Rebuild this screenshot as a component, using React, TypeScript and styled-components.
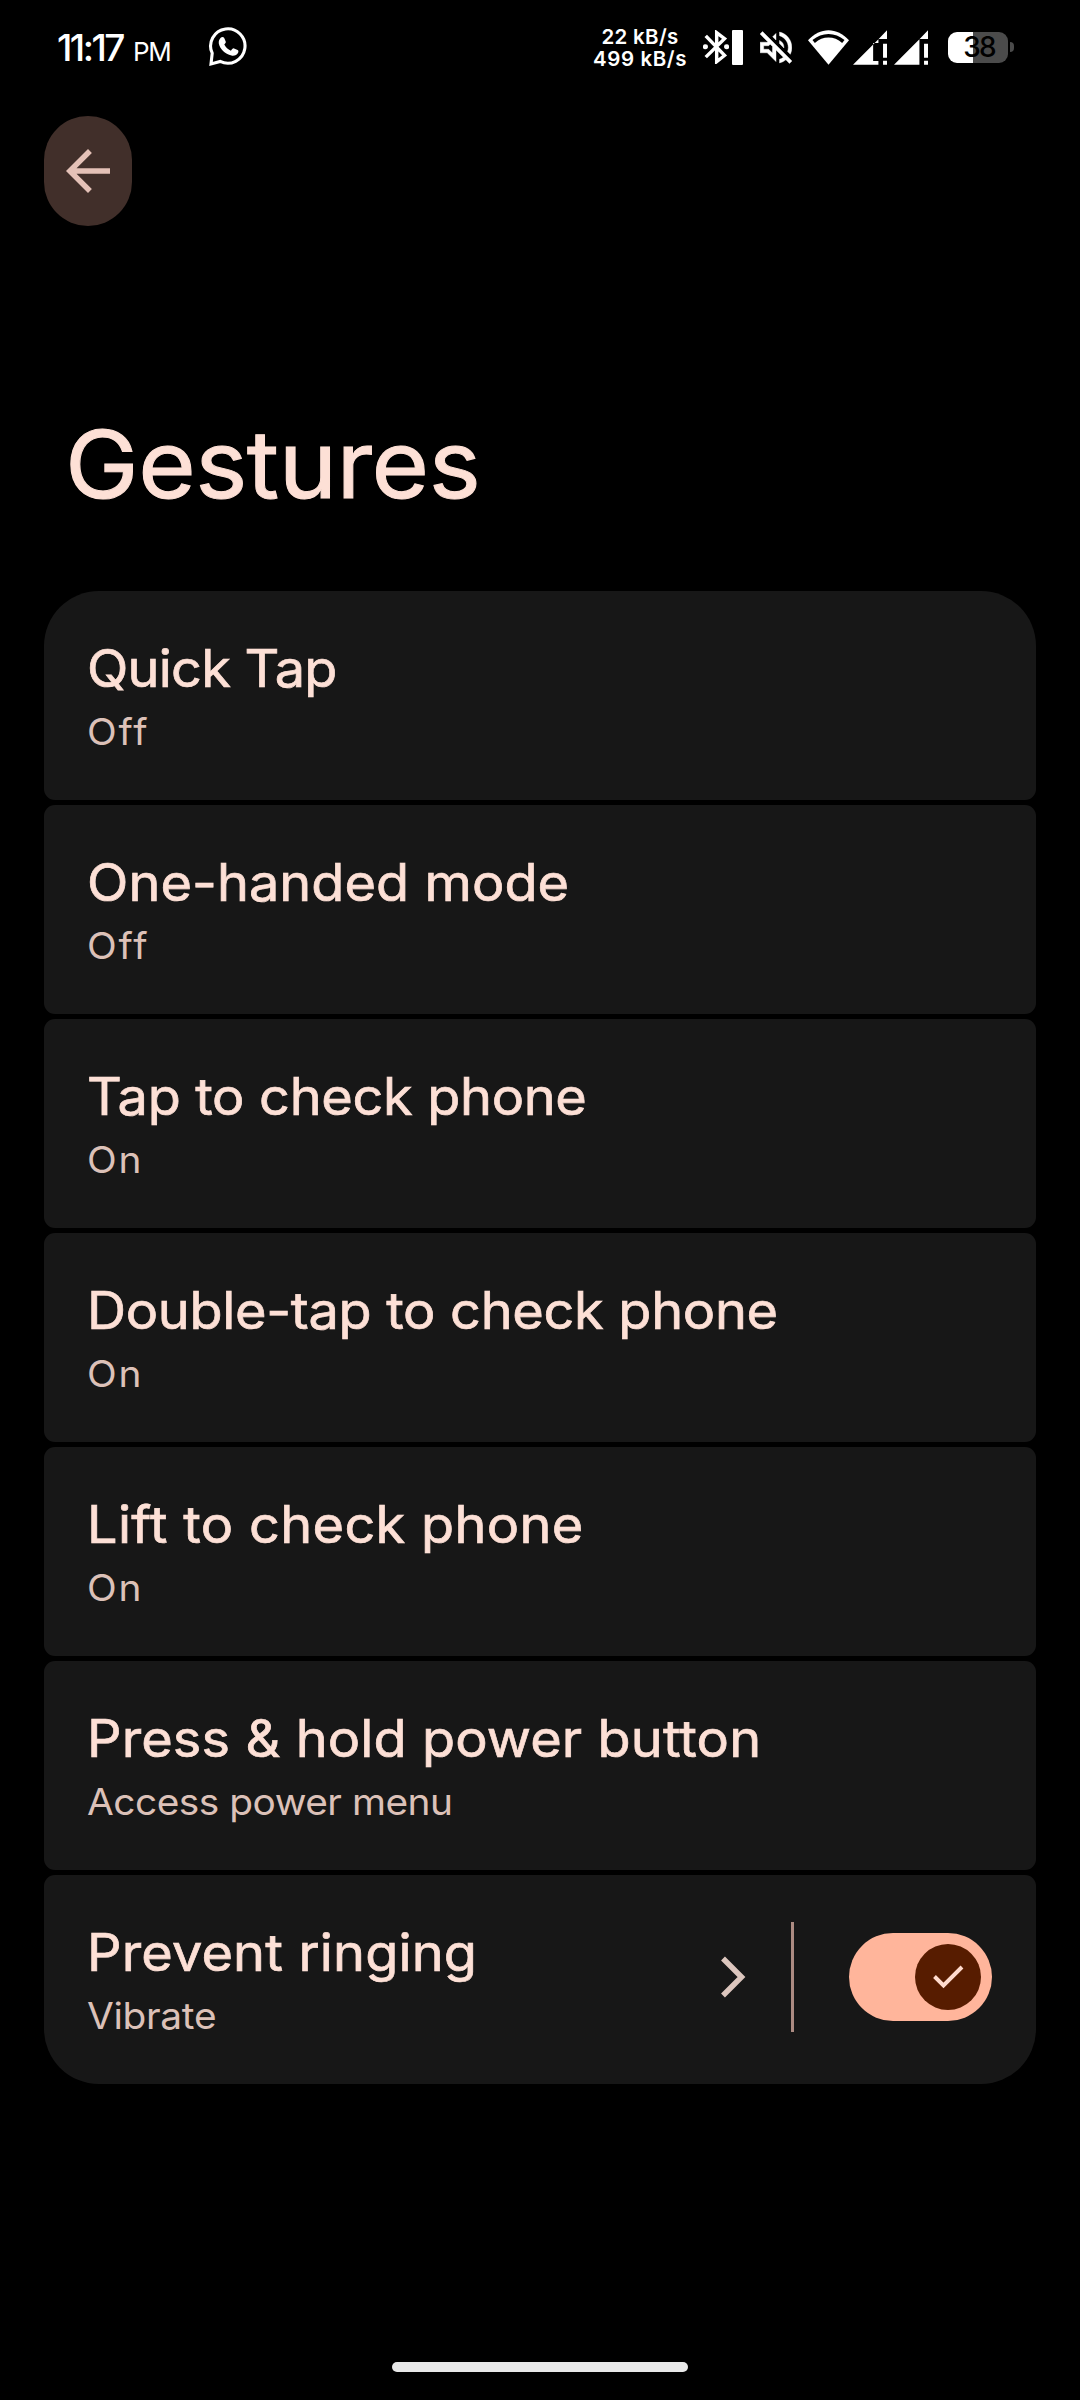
import React from 'react';
import styled, { createGlobalStyle } from 'styled-components';

const GlobalStyle = createGlobalStyle`
  * { box-sizing: border-box; }
  body {
    margin: 0;
    background: #000;
    font-family: Inter, "Noto Sans", sans-serif;
  }
`;

const Screen = styled.main`
  display: flex;
  flex-direction: column;
  width: 1080px;
  height: 2400px;
  background: #000;
  overflow: hidden;
`;

const StatusBar = styled.header`
  display: flex;
  align-items: center;
  height: 94px;
  padding: 0 66px 0 57px;
  color: #fff;
  flex: none;
`;

const Clock = styled.div`
  display: flex;
  align-items: baseline;
  width: 151px;
  font-size: 37px;
  letter-spacing: -2.5px;
  font-weight: 500;
  white-space: nowrap;
`;

const Meridiem = styled.span`
  margin-left: 10px;
  font-size: 26px;
  font-weight: 400;
  letter-spacing: -1.3px;
`;

const StatusIcons = styled.div`
  display: flex;
  align-items: center;
  margin-left: auto;
`;

const NetSpeed = styled.div`
  width: 96px;
  padding-top: 2px;
  margin-right: 15px;
  font-size: 20.5px;
  font-weight: 600;
  line-height: 21.7px;
  text-align: center;
  white-space: nowrap;
`;

const SpeedLine = styled.div<{ $tracking: number }>`
  letter-spacing: ${(p) => p.$tracking}px;
`;

const Glyph = styled.svg<{ $gap?: number }>`
  display: block;
  flex: none;
  margin-right: ${(p) => p.$gap ?? 0}px;
`;

const BluetoothLevel = styled.div`
  width: 11px;
  height: 35px;
  margin-right: 17px;
  background: #fff;
  border-radius: 1px;
`;

const Battery = styled.div`
  display: flex;
  align-items: center;
  justify-content: center;
  width: 60px;
  height: 31px;
  padding-left: 2px;
  border-radius: 9px;
  background: linear-gradient(to right, #fff 25px, #4b4b4b 25px);
  color: #000;
  font-size: 28px;
  font-weight: 500;
  line-height: 31px;
  letter-spacing: -1.9px;
`;

const BatteryTip = styled.div`
  width: 4px;
  height: 10px;
  margin-left: 2px;
  border-radius: 0 5px 5px 0;
  background: #4b4b4b;
`;

const BackButton = styled.button`
  display: flex;
  align-items: center;
  justify-content: center;
  flex: none;
  width: 88px;
  height: 110px;
  margin: 22px 0 0 44px;
  padding: 0;
  border: 0;
  border-radius: 44px;
  background: #412f2a;
`;

const PageTitle = styled.h1`
  margin: 181px 0 70px 65px;
  color: #fde0d6;
  font-size: 94px;
  font-weight: 400;
  line-height: 114px;
  letter-spacing: -0.45px;
  transform: scaleX(1.05);
  transform-origin: left;
  -webkit-text-stroke: 1px #fde0d6;
`;

const List = styled.section`
  display: flex;
  flex-direction: column;
  gap: 5px;
  margin: 0 44px;
  border-radius: 55px;
  overflow: hidden;
`;

const Row = styled.div`
  display: flex;
  align-items: center;
  justify-content: space-between;
  height: 209px;
  padding: 0 44px 0 43px;
  border-radius: 11px;
  background: #171717;
`;

const RowText = styled.div`
  display: flex;
  flex-direction: column;
  gap: 10px;
  padding-bottom: 1px;
  white-space: nowrap;
  transform: scaleX(1.05);
  transform-origin: left;
`;

const RowTitle = styled.div<{ $tracking: number }>`
  color: #fde0d6;
  font-size: 51.5px;
  line-height: 62px;
  letter-spacing: ${(p) => p.$tracking}px;
  -webkit-text-stroke: 0.7px #fde0d6;
`;

const RowSummary = styled.div<{ $tracking: number }>`
  color: #dcc1b8;
  font-size: 37px;
  line-height: 45px;
  letter-spacing: ${(p) => p.$tracking}px;
`;

const RowControls = styled.div`
  display: flex;
  align-items: center;
  padding-bottom: 5px;
`;

const Divider = styled.div`
  width: 3px;
  height: 110px;
  margin: 0 55px 0 45px;
  background: #ac8b82;
`;

const Switch = styled.div`
  display: flex;
  align-items: center;
  justify-content: flex-end;
  width: 143px;
  height: 88px;
  padding: 11px;
  border-radius: 44px;
  background: #ffb59b;
`;

const Thumb = styled.div`
  width: 66px;
  height: 66px;
  border-radius: 50%;
  background: #571c00;
`;

const HomeHandle = styled.div`
  width: 296px;
  height: 10px;
  margin: auto auto 28px;
  border-radius: 5px;
  background: #e9e9e9;
`;

interface Gesture {
  title: string;
  summary: string;
  titleTracking: number;
  summaryTracking: number;
  toggle?: boolean;
}

const gestures: Gesture[] = [
  { title: 'Quick Tap', summary: 'Off', titleTracking: -0.75, summaryTracking: 1.8 },
  { title: 'One-handed mode', summary: 'Off', titleTracking: 0.05, summaryTracking: 1.8 },
  { title: 'Tap to check phone', summary: 'On', titleTracking: -0.32, summaryTracking: 1.6 },
  { title: 'Double-tap to check phone', summary: 'On', titleTracking: -0.3, summaryTracking: 1.6 },
  { title: 'Lift to check phone', summary: 'On', titleTracking: 0.3, summaryTracking: 1.6 },
  { title: 'Press & hold power button', summary: 'Access power menu', titleTracking: 0.1, summaryTracking: -0.48 },
  { title: 'Prevent ringing', summary: 'Vibrate', titleTracking: 0.15, summaryTracking: -0.3, toggle: true },
];

const WhatsApp = () => (
  <Glyph width="40" height="40" viewBox="0 0 40 40" fill="none">
    <path
      d="M4.2 26.2A17.2 17.2 0 1 1 12.2 34.4L3 37Z"
      stroke="#fff"
      strokeWidth="3.1"
      strokeLinejoin="miter"
    />
    <path
      d="M12.7 10.8c1.2-1.2 2.9-1 3.5.3l1.5 3.4c.4.9-.1 1.6-1.4 3.1 1.5 2.9 3.6 4.8 6.6 6.1 1.7-2 2.2-2.7 3.2-2.3l3.5 1.7c1 .5 1 1.4.5 2.6-1 2.5-4.1 3.5-6.6 2.9-6.6-1.6-11.6-6.6-12.7-12.1-.3-2.2.5-4.3 1.9-5.7Z"
      fill="#fff"
    />
  </Glyph>
);

const Bluetooth = () => (
  <Glyph $gap={3} width="26" height="34" viewBox="0 0 76 103" preserveAspectRatio="none">
    <path d="M8 18 63 77 40 96V8L63 26 8 82" fill="none" stroke="#fff" strokeWidth="10" />
    <circle cx="7" cy="51" r="7.5" fill="#fff" />
    <circle cx="69" cy="51" r="7.5" fill="#fff" />
  </Glyph>
);

const Muted = () => (
  <Glyph $gap={16} width="32" height="33" viewBox="2.9 2.9 18.2 18.2">
    <path
      fill="#fff"
      stroke="#fff"
      strokeWidth="0.25"
      d="M4.34 2.93 2.93 4.34 7.29 8.7 7 9H3v6h4l5 5v-6.59l4.18 4.18c-.65.49-1.38.88-2.18 1.11v2.06a8.94 8.94 0 0 0 3.61-1.75l2.05 2.05 1.41-1.41L4.34 2.93zM10 15.17 7.83 13H5v-2h2.83l.88-.88L10 11.41v3.76zM19 12c0 .82-.15 1.61-.41 2.34l1.53 1.53c.56-1.17.88-2.48.88-3.87 0-4.28-2.99-7.86-7-8.77v2.06c2.89.86 5 3.54 5 6.71zm-7-8-1.88 1.88L12 7.76V4zm4.5 8A4.5 4.5 0 0 0 14 7.97v1.79l2.48 2.48c.01-.08.02-.16.02-.24z"
    />
  </Glyph>
);

const Wifi = () => (
  <Glyph $gap={4} width="41" height="35" viewBox="0 0 123 104">
    <path d="M0 30C36-10 87-10 123 30L61.5 104Z" fill="#fff" />
    <path d="M17 34C44 11 79 11 106 34" fill="none" stroke="#000" strokeWidth="11" />
  </Glyph>
);

const Signal = ({ notch, gap }: { notch?: boolean; gap: number }) => (
  <Glyph $gap={gap} width="34" height="35" viewBox="0 0 103 104">
    <path
      fill="#fff"
      d={
        notch
          ? 'M0 104 77 27V38H61V93H77V104ZM77 27 103 0V26H78Z'
          : 'M0 104 77 27V104ZM77 27 103 0V26H78Z'
      }
    />
    <path d="M91 41h12v42H91ZM91 92h12v12H91Z" fill="#fff" />
  </Glyph>
);

const ArrowBack = () => (
  <Glyph width="66" height="66" viewBox="0 0 24 24">
    <path fill="#e4c1b7" d="M20 11H7.83l5.59-5.59L12 4l-8 8 8 8 1.41-1.41L7.83 13H20v-2z" />
  </Glyph>
);

const Chevron = () => (
  <Glyph width="25" height="42" viewBox="0 0 25 42">
    <path d="M2 2.5 20.5 21 2 39.5" fill="none" stroke="#dcc6be" strokeWidth="5.5" />
  </Glyph>
);

const Check = () => (
  <Glyph width="66" height="66" viewBox="0 0 66 66">
    <path d="M19.5 32.5 28.5 41.5 47 23" fill="none" stroke="#ffdbce" strokeWidth="3.9" />
  </Glyph>
);

export default function App() {
  return (
    <Screen>
      <GlobalStyle />
      <StatusBar>
        <Clock>
          11:17<Meridiem>PM</Meridiem>
        </Clock>
        <WhatsApp />
        <StatusIcons>
          <NetSpeed>
            <SpeedLine $tracking={0.3}>22 kB/s</SpeedLine>
            <SpeedLine $tracking={0.6}>499 kB/s</SpeedLine>
          </NetSpeed>
          <Bluetooth />
          <BluetoothLevel />
          <Muted />
          <Wifi />
          <Signal notch gap={7} />
          <Signal gap={20} />
          <Battery>38</Battery>
          <BatteryTip />
        </StatusIcons>
      </StatusBar>
      <BackButton aria-label="Back">
        <ArrowBack />
      </BackButton>
      <PageTitle>Gestures</PageTitle>
      <List>
        {gestures.map((g) => (
          <Row key={g.title}>
            <RowText>
              <RowTitle $tracking={g.titleTracking}>{g.title}</RowTitle>
              <RowSummary $tracking={g.summaryTracking}>{g.summary}</RowSummary>
            </RowText>
            {g.toggle && (
              <RowControls>
                <Chevron />
                <Divider />
                <Switch role="switch" aria-checked="true">
                  <Thumb>
                    <Check />
                  </Thumb>
                </Switch>
              </RowControls>
            )}
          </Row>
        ))}
      </List>
      <HomeHandle />
    </Screen>
  );
}
